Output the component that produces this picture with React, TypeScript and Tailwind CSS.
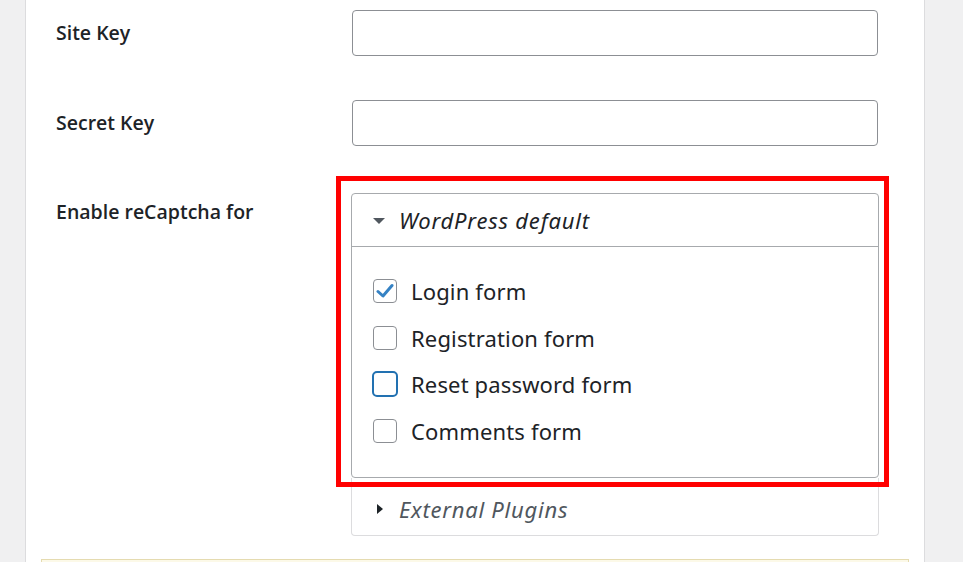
import React from 'react';

const items = [
  { label: 'Login form', checked: true },
  { label: 'Registration form' },
  { label: 'Reset password form', focused: true },
  { label: 'Comments form' },
];

const Checkbox: React.FC<{ checked?: boolean; focused?: boolean }> = ({ checked, focused }) => {
  if (focused) {
    return <span className="block w-[26px] h-[26px] -mx-[1px] rounded-[5px] border-2 border-[#2271b1] bg-white" />;
  }
  return (
    <span className="flex items-center justify-center w-[24px] h-[24px] rounded-[4px] border border-[#8c8f94] bg-white">
      {checked && (
        <svg width="18" height="16" viewBox="0 0 18 16">
          <path d="M2 8.5 L7 13 L16 2.5" fill="none" stroke="#3582c4" strokeWidth="3" strokeLinecap="round" strokeLinejoin="round" />
        </svg>
      )}
    </span>
  );
};

const App: React.FC = () => {
  return (
    <div className="flex w-[963px] h-[562px] overflow-hidden bg-[#f0f0f1] text-[#1d2327] font-['Noto_Sans',sans-serif]">
      <div className="w-[25px] shrink-0" />
      <div className="w-[900px] shrink-0 bg-white border-x border-[#dcdcde] pt-[10px]">
        <div className="flex">
          <div className="w-[325px] pl-[30px] leading-[46px] text-[19.5px] font-semibold font-['Open_Sans',sans-serif]">Site Key</div>
          <input className="ml-[1px] w-[526px] h-[46px] rounded-[4px] border border-[#8c8f94] bg-white" />
        </div>

        <div className="flex mt-[44px]">
          <div className="w-[325px] pl-[30px] leading-[46px] text-[19.5px] font-semibold font-['Open_Sans',sans-serif]">Secret Key</div>
          <input className="ml-[1px] w-[526px] h-[46px] rounded-[4px] border border-[#8c8f94] bg-white" />
        </div>

        <div className="flex mt-[47px]">
          <div className="w-[325px] pl-[30px] pt-[5px] leading-[28px] text-[19.5px] font-semibold font-['Open_Sans',sans-serif]">Enable reCaptcha for</div>
          <div className="relative w-[528px]">
            <div className="rounded-[4px] border border-[#a7aaad]">
              <div className="flex items-center h-[53px] pl-[21px] pt-[1px] border-b border-[#a7aaad]">
                <svg width="12" height="6" viewBox="0 0 12 6" className="mr-[14px]">
                  <path d="M0 0 H12 L6 6 Z" fill="#50575e" />
                </svg>
                <span className="italic text-[22px] tracking-[0.8px]">WordPress default</span>
              </div>
              <div className="flex flex-col gap-[22.7px] pt-[32px] pb-[34px] pl-[21px]">
                {items.map((it) => (
                  <label key={it.label} className="flex items-center h-[24px]">
                    <Checkbox checked={it.checked} focused={it.focused} />
                    <span className="ml-[14px] text-[22px] leading-[24px] tracking-[0.15px]">{it.label}</span>
                  </label>
                ))}
              </div>
            </div>
            <div className="flex items-center h-[58px] pl-[25px] pt-[5px] border border-t-0 border-[#dcdcde] rounded-b-[4px]">
              <svg width="6" height="10" viewBox="0 0 6 10" className="mr-[16px]">
                <path d="M0 0 V10 L6 5 Z" fill="#1d2327" />
              </svg>
              <span className="italic text-[22px] tracking-[0.75px] text-[#50575e]">External Plugins</span>
            </div>
            <div className="absolute left-[-15px] top-[-17px] w-[553px] h-[311px] border-[5px] border-[#ff0000] pointer-events-none" />
          </div>
        </div>

        <div className="mt-[23px] mx-[15px] h-[40px] border border-[#e5dbb0] bg-[#fcf9e8]" />
      </div>
    </div>
  );
};

export default App;
